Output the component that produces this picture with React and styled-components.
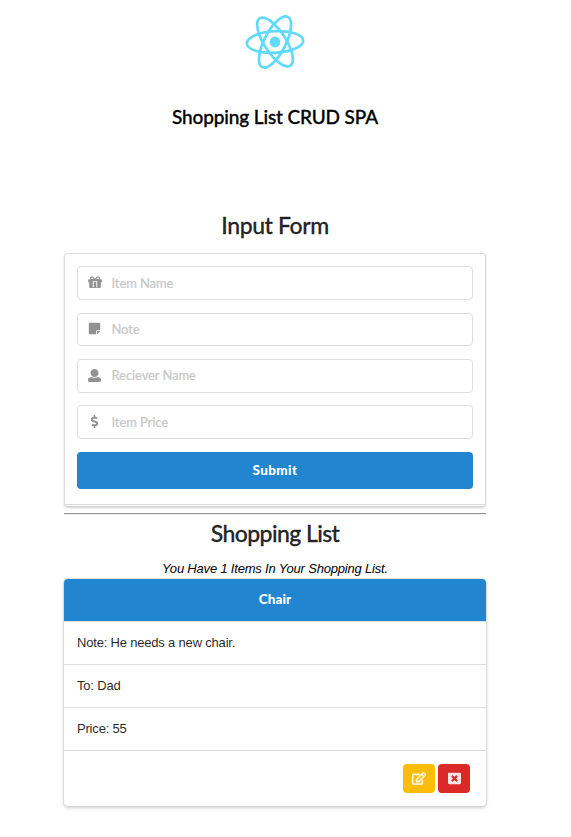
import React from 'react';
import styled, { createGlobalStyle } from 'styled-components';
import { FaStickyNote, FaDollarSign, FaRegEdit, FaWindowClose } from 'react-icons/fa';

const GlobalStyle = createGlobalStyle`
  *, *::before, *::after { box-sizing: border-box; }
  body {
    margin: 0;
    background: #fff;
    color: rgba(0, 0, 0, 0.87);
    font-family: Lato, 'Liberation Sans', sans-serif;
    font-size: 13px;
  }
`;

const Page = styled.main`
  width: 422px;
  margin-left: 64px;
  padding-bottom: 30px;
`;

const Header = styled.header`
  height: 211px;
  padding-top: 10px;
  text-align: center;
`;

const Logo = styled.svg`
  display: block;
  width: 64px;
  height: 64px;
  margin: 0 auto;
`;

const Title = styled.h3`
  margin: 31px 0 0;
  color: #000;
  font-size: 19px;
  font-weight: 500;
  line-height: 24px;
  letter-spacing: -0.13px;
  -webkit-text-stroke: 0.3px;
`;

const SectionTitle = styled.h2`
  margin: 0;
  font-size: 23px;
  font-weight: 500;
  line-height: 28px;
  letter-spacing: ${({ $tracking }) => $tracking}px;
  text-align: center;
  -webkit-text-stroke: 0.3px;
`;

const Form = styled.form`
  display: flex;
  flex-direction: column;
  height: 254px;
  margin-top: 14px;
  padding: 12px;
  border: 1px solid #d9dadb;
  border-bottom-color: #d0d0d1;
  border-radius: 4px;
  box-shadow: 0 1px 2px rgba(34, 36, 38, 0.2);
  background: linear-gradient(#d9dadb, #d9dadb) 0 250px / 100% 1px no-repeat;
`;

const Field = styled.label`
  display: flex;
  flex: none;
  align-items: center;
  height: ${({ $height }) => $height || 34}px;
  margin-bottom: ${({ $gap }) => $gap || 13}px;
  border: 1px solid #dededf;
  border-radius: 4px;
`;

const FieldIcon = styled.span`
  display: flex;
  flex: none;
  justify-content: center;
  width: 33px;
  padding-bottom: ${({ $lift }) => $lift || 0}px;
  color: #919191;
  font-size: 13px;
`;

const Input = styled.input`
  flex: 1;
  min-width: 0;
  height: 100%;
  padding: 0 0 ${({ $lift }) => $lift || 0}px 0.5px;
  border: 0;
  outline: 0;
  background: transparent;
  font: 13px Lato, sans-serif;
  letter-spacing: -0.1px;

  &::placeholder {
    color: #c7c7c7;
    opacity: 1;
    -webkit-text-stroke: 0.2px;
  }
`;

const SubmitButton = styled.button`
  flex: none;
  height: 37px;
  padding: 0 0 2px;
  border: 0;
  border-radius: 4px;
  background: #2185d0;
  color: #fff;
  font: 900 13.5px Lato, sans-serif;
  letter-spacing: 0.4px;
`;

const Divider = styled.hr`
  height: 2px;
  margin: 6px 0 4px;
  border: 0;
  border-top: 1px solid #949494;
  border-bottom: 1px solid #ececec;
`;

const Summary = styled.p`
  margin: 14px 0 2px;
  color: #000;
  font: italic 13px/16px 'Liberation Sans', sans-serif;
  letter-spacing: -0.19px;
  text-align: center;
`;

const Card = styled.section`
  height: 227px;
  border-radius: 4px;
  box-shadow: 0 1px 3px #d4d4d5, 0 2px 4px rgba(34, 36, 38, 0.15), 0 0 0 1px rgba(34, 36, 38, 0.08);
  overflow: hidden;
`;

const CardTitle = styled.h4`
  height: 42px;
  margin: 0;
  background: #2185d0;
  color: #fff;
  font: 900 13.5px/41px Lato, sans-serif;
  letter-spacing: 0.1px;
  text-align: center;
`;

const CardRow = styled.div`
  height: 43px;
  padding: 0 13px;
  border-top: 1px solid #dededf;
  font: 13px/42px 'Liberation Sans', sans-serif;
  letter-spacing: -0.19px;
`;

const Actions = styled.div`
  display: flex;
  justify-content: flex-end;
  gap: 3px;
  padding: 13px 16px;
  border-top: 1px solid #dededf;
`;

const IconButton = styled.button`
  display: flex;
  align-items: center;
  justify-content: center;
  width: 32px;
  height: 29px;
  padding: 0 0 1px;
  border: 0;
  border-radius: 4px;
  background: ${({ $color }) => $color};
  color: rgba(255, 255, 255, 0.88);
  font-size: 13px;

  svg {
    width: ${({ $size }) => $size}px;
    stroke: currentColor;
    stroke-width: ${({ $weight }) => $weight || 0}px;
  }
`;

const GiftIcon = () => (
  <svg width="14" height="13" viewBox="0 0 14 13" fill="currentColor">
    <path d="M1.2 3.2h11.6a1 1 0 0 1 1 1v2.3h-1v4.6a1 1 0 0 1-1 1H9.3V5.2H4.7v6.9H2.2a1 1 0 0 1-1-1V6.5h-1V4.2a1 1 0 0 1 1-1z" />
    <path d="M5.7 6h2.6v5.2H5.7zM4.5 11.2h5v.9h-5z" />
    <path d="M6.8 3.6C5.8 1.7 4.9.9 4 .9c-1.9 0-1.9 2.6 0 2.7zM7.2 3.6c1-1.9 1.9-2.7 2.8-2.7 1.9 0 1.9 2.6 0 2.7z" fill="none" stroke="currentColor" strokeWidth="1.2" />
  </svg>
);

const UserIcon = () => (
  <svg width="13" height="13" viewBox="0 0 512 512" fill="currentColor">
    <path d="M256 0c88.366 0 160 71.634 160 160s-71.634 160-160 160S96 248.366 96 160 167.634 0 256 0zm183.283 333.821l-71.313-17.828c-74.923 53.89-165.738 41.864-223.94 0l-71.313 17.828C29.981 344.505 0 382.903 0 426.955V464c0 26.51 21.49 48 48 48h416c26.51 0 48-21.49 48-48v-37.045c0-44.052-29.981-82.45-72.717-93.134z" />
  </svg>
);

const fields = [
  { label: 'Item Name', Icon: GiftIcon, iconLift: 1 },
  { label: 'Note', Icon: FaStickyNote, height: 33, iconLift: 2, lift: 1 },
  { label: 'Reciever Name', Icon: UserIcon, gap: 12, iconLift: 2, lift: 2 },
  { label: 'Item Price', Icon: FaDollarSign, iconLift: 2 },
];

const details = ['Note: He needs a new chair.', 'To: Dad', 'Price: 55'];

export default function App() {
  return (
    <>
      <GlobalStyle />
      <Page>
        <Header>
          <Logo viewBox="-32 -32 64 64" fill="none" stroke="#61dafb" strokeWidth="2.7">
            <g transform="rotate(-3)">
              {[0, 60, 120].map((angle) => (
                <ellipse key={angle} rx="28.2" ry="10.8" transform={`rotate(${angle})`} />
              ))}
            </g>
            <circle r="5.4" fill="#61dafb" stroke="none" />
          </Logo>
          <Title>Shopping List CRUD SPA</Title>
        </Header>
        <SectionTitle $tracking={-0.42}>Input Form</SectionTitle>
        <Form onSubmit={(event) => event.preventDefault()}>
          {fields.map(({ label, Icon, height, gap, iconLift, lift }) => (
            <Field key={label} $height={height} $gap={gap}>
              <FieldIcon $lift={iconLift}><Icon /></FieldIcon>
              <Input placeholder={label} aria-label={label} $lift={lift} />
            </Field>
          ))}
          <SubmitButton>Submit</SubmitButton>
        </Form>
        <Divider />
        <SectionTitle $tracking={-0.58}>Shopping List</SectionTitle>
        <Summary>You Have 1 Items In Your Shopping List.</Summary>
        <Card>
          <CardTitle>Chair</CardTitle>
          {details.map((text) => <CardRow key={text}>{text}</CardRow>)}
          <Actions>
            <IconButton type="button" $color="#fbbd08" $size={14} $weight={20} aria-label="Edit"><FaRegEdit /></IconButton>
            <IconButton type="button" $color="#db2828" $size={13} aria-label="Delete"><FaWindowClose /></IconButton>
          </Actions>
        </Card>
      </Page>
    </>
  );
}
